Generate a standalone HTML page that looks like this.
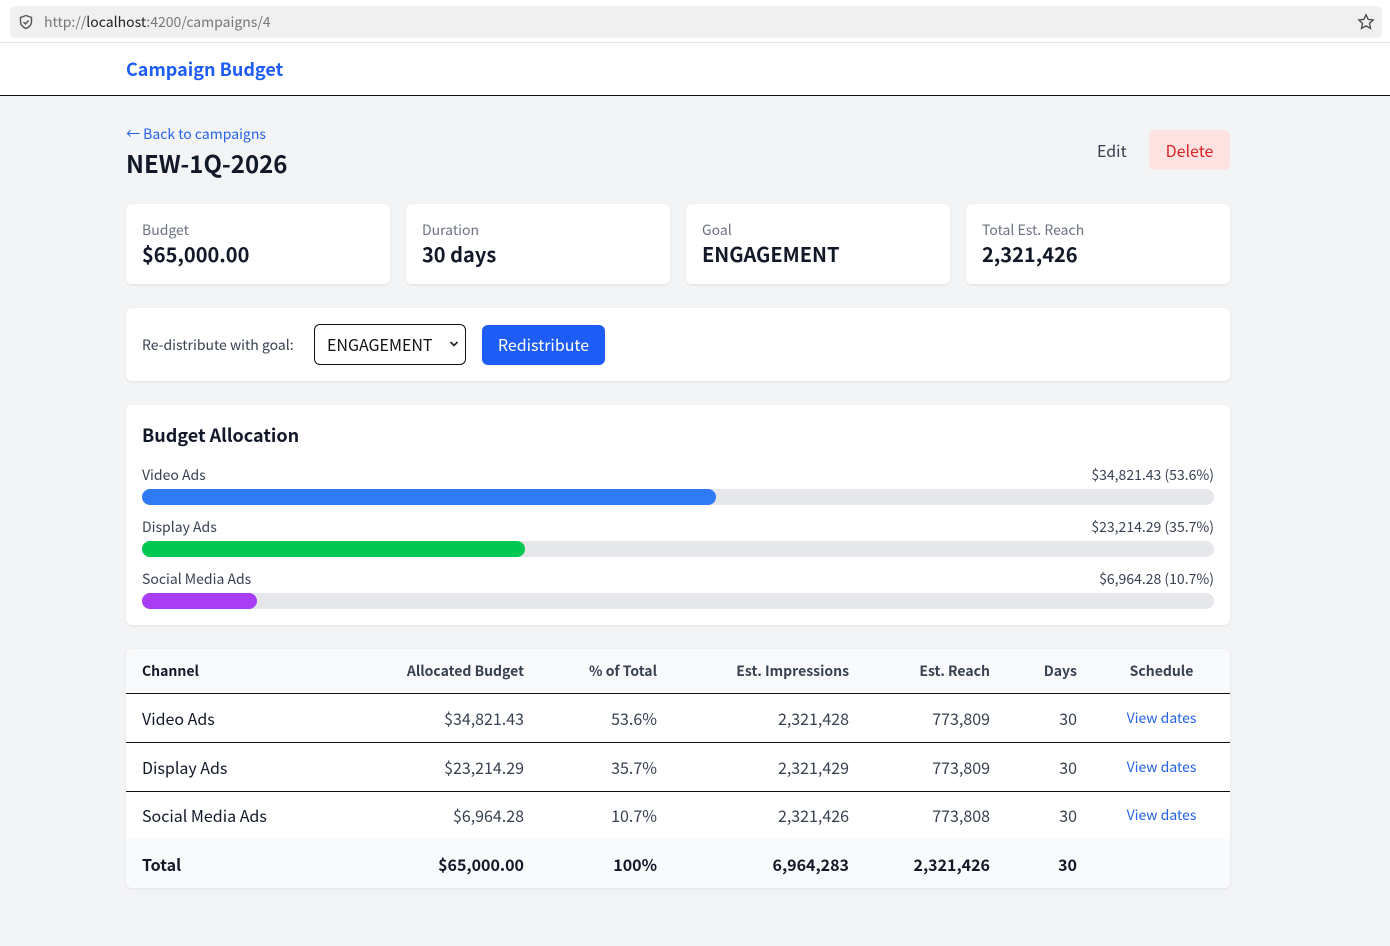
<!DOCTYPE html>
<html><head><meta charset="utf-8">
<style>
*{box-sizing:border-box;margin:0;padding:0}
body{width:1390px;height:946px;background:#f3f4f6;font-family:"Noto Sans CJK JP","Liberation Sans",sans-serif;color:#1f2937;position:relative;overflow:hidden}
.abs{position:absolute}
.topbar{left:0;top:0;width:1390px;height:43px;background:#fff;border-bottom:1px solid #e5e5e5}
.url{left:10px;top:6px;width:1372px;height:32px;background:#f0f0f0;border-radius:6px;font-size:14px;color:#777;line-height:32px;padding-left:34px}
.url b{color:#222;font-weight:400}
.nav{left:0;top:43px;width:1390px;height:53px;background:#fff;border-bottom:1px solid #111}
.card{background:#fff;border-radius:6px;box-shadow:0 1px 3px rgba(0,0,0,.08)}
.lbl{font-size:14px;color:#6b7280}
.val{font-size:20px;font-weight:700;color:#111827}
.bar{left:16px;width:1072px;height:16px;background:#e5e7eb;border-radius:8px}
.bar i{display:block;height:16px;border-radius:8px}
.row{font-size:14px;color:#374151}
table{border-collapse:collapse;width:1104px;table-layout:fixed}
td,th{font-size:16px;padding:0 16px;text-align:right;white-space:nowrap}
th{font-size:14px;font-weight:600;color:#374151;height:44px;border-bottom:1px solid #111}
td{height:49px;color:#374151}
td:first-child,th:first-child{text-align:left;color:#111827}
tbody tr td{border-bottom:1px solid #111}
tbody tr:last-child td{border-bottom:none;height:48px}
a{color:#2563eb;text-decoration:none}
</style></head><body>
<div class="abs topbar"></div>
<div class="abs url">http://<b>localhost</b>:4200/campaigns/4</div>
<svg class="abs" style="left:18px;top:14px" width="16" height="16" viewBox="0 0 16 16" fill="none" stroke="#555" stroke-width="1.4"><path d="M8 1.5L2.5 3.5v4c0 3.5 2.5 5.8 5.5 7 3-1.2 5.5-3.5 5.5-7v-4z"/><path d="M5.5 8l2 2 3-3.5"/></svg>
<svg class="abs" style="left:1357px;top:13px" width="18" height="18" viewBox="0 0 18 18" fill="none" stroke="#444" stroke-width="1.3"><path d="M9 1.8l2.2 4.6 5 .6-3.7 3.4 1 5-4.5-2.5-4.5 2.5 1-5L1.8 7l5-.6z"/></svg>
<div class="abs nav"></div>
<div class="abs" style="left:126px;top:56px;font-size:18px;font-weight:700;color:#1d5cf5">Campaign Budget</div>

<div class="abs" style="left:126px;top:124px;font-size:14px;color:#2563eb">← Back to campaigns</div>
<div class="abs" style="left:126px;top:145px;font-size:24px;font-weight:700;color:#111827">NEW-1Q-2026</div>
<div class="abs" style="left:1097px;top:138px;font-size:16px;color:#374151">Edit</div>
<div class="abs" style="left:1149px;top:130px;width:81px;height:40px;background:#fee2e2;border-radius:6px;color:#dc2626;font-size:16px;text-align:center;line-height:40px">Delete</div>

<div class="abs card" style="left:126px;top:204px;width:264px;height:80px"><div class="abs lbl" style="left:16px;top:16px">Budget</div><div class="abs val" style="left:16px;top:35px">$65,000.00</div></div>
<div class="abs card" style="left:406px;top:204px;width:264px;height:80px"><div class="abs lbl" style="left:16px;top:16px">Duration</div><div class="abs val" style="left:16px;top:35px">30 days</div></div>
<div class="abs card" style="left:686px;top:204px;width:264px;height:80px"><div class="abs lbl" style="left:16px;top:16px">Goal</div><div class="abs val" style="left:16px;top:35px">ENGAGEMENT</div></div>
<div class="abs card" style="left:966px;top:204px;width:264px;height:80px"><div class="abs lbl" style="left:16px;top:16px">Total Est. Reach</div><div class="abs val" style="left:16px;top:35px">2,321,426</div></div>

<div class="abs card" style="left:126px;top:308px;width:1104px;height:73px">
 <div class="abs" style="left:16px;top:27px;font-size:14px;color:#374151">Re-distribute with goal:</div>
 <div class="abs" style="left:188px;top:16px;width:152px;height:41px;border:1px solid #111;border-radius:6px;font-size:16px;line-height:39px;padding-left:12px;color:#111">ENGAGEMENT
  <svg class="abs" style="right:6px;top:15px" width="10" height="8" viewBox="0 0 10 8" fill="none" stroke="#222" stroke-width="1.6"><path d="M1.5 2l3.5 3.5L8.5 2"/></svg></div>
 <div class="abs" style="left:356px;top:17px;width:123px;height:40px;background:#1d5cf5;border-radius:6px;color:#fff;font-size:16px;text-align:center;line-height:39px">Redistribute</div>
</div>

<div class="abs card" style="left:126px;top:405px;width:1104px;height:220px">
 <div class="abs" style="left:16px;top:17px;font-size:18px;font-weight:600;color:#111827">Budget Allocation</div>
 <div class="abs row" style="left:16px;top:60px">Video Ads</div><div class="abs row" style="right:16px;top:60px">$34,821.43 (53.6%)</div>
 <div class="abs bar" style="top:84px"><i style="width:574px;background:#2f7bf5"></i></div>
 <div class="abs row" style="left:16px;top:112px">Display Ads</div><div class="abs row" style="right:16px;top:112px">$23,214.29 (35.7%)</div>
 <div class="abs bar" style="top:136px"><i style="width:383px;background:#00c853"></i></div>
 <div class="abs row" style="left:16px;top:164px">Social Media Ads</div><div class="abs row" style="right:16px;top:164px">$6,964.28 (10.7%)</div>
 <div class="abs bar" style="top:188px"><i style="width:115px;background:#a93cf5"></i></div>
</div>

<div class="abs card" style="left:126px;top:649px;width:1104px;height:239px;overflow:hidden">
<table>
<colgroup><col style="width:200px"><col style="width:214px"><col style="width:133px"><col style="width:192px"><col style="width:141px"><col style="width:87px"><col style="width:137px"></colgroup>
<thead><tr style="background:#f9fafb"><th>Channel</th><th>Allocated Budget</th><th>% of Total</th><th>Est. Impressions</th><th>Est. Reach</th><th>Days</th><th style="text-align:center">Schedule</th></tr></thead>
<tbody>
<tr><td>Video Ads</td><td>$34,821.43</td><td>53.6%</td><td>2,321,428</td><td>773,809</td><td>30</td><td style="text-align:center;font-size:14px"><a>View dates</a></td></tr>
<tr><td>Display Ads</td><td>$23,214.29</td><td>35.7%</td><td>2,321,429</td><td>773,809</td><td>30</td><td style="text-align:center;font-size:14px"><a>View dates</a></td></tr>
<tr><td>Social Media Ads</td><td>$6,964.28</td><td>10.7%</td><td>2,321,426</td><td>773,808</td><td>30</td><td style="text-align:center;font-size:14px"><a>View dates</a></td></tr>
</tbody>
<tfoot><tr style="background:#f9fafb"><td style="height:47px;font-weight:600">Total</td><td style="color:#111827;font-weight:600">$65,000.00</td><td style="color:#111827;font-weight:600">100%</td><td style="color:#111827;font-weight:600">6,964,283</td><td style="color:#111827;font-weight:600">2,321,426</td><td style="color:#111827;font-weight:600">30</td><td></td></tr></tfoot>
</table>
</div>
</body></html>
